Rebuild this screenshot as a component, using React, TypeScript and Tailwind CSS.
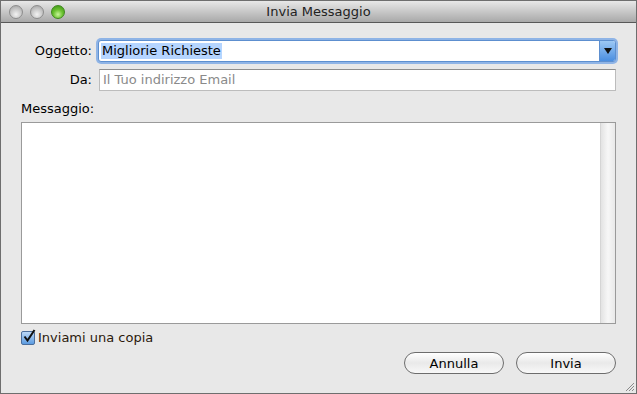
import React, { useState } from 'react';

const TrafficLight = ({ active }: { active?: boolean }) => (
  <span
    className={`block w-[14px] h-[14px] rounded-full border ${
      active
        ? 'border-[#3f8a1e] bg-[radial-gradient(circle_at_50%_70%,#c8f59a_0%,#6cc232_45%,#3a8f12_100%)]'
        : 'border-[#8d8d8d] bg-[radial-gradient(circle_at_50%_70%,#f2f2f2_0%,#c9c9c9_50%,#9e9e9e_100%)]'
    }`}
  />
);

export default function App() {
  const [copy, setCopy] = useState(true);

  return (
    <div
      className="w-[637px] h-[394px] flex flex-col bg-[#e8e8e8] border border-[#6e6e6e] text-[13px] text-black overflow-hidden"
      style={{ fontFamily: '"Lucida Grande", "DejaVu Sans", Arial, sans-serif' }}
    >
      {/* Title bar */}
      <div className="relative h-[22px] shrink-0 flex items-center bg-gradient-to-b from-[#e8e8e8] to-[#a9a9a9] border-b border-[#585858]">
        <div className="flex items-center gap-[7px] pl-[8px]">
          <TrafficLight />
          <TrafficLight />
          <TrafficLight active />
        </div>
        <div className="absolute inset-0 flex items-center justify-center text-[13px] text-[#222]">
          Invia Messaggio
        </div>
      </div>

      {/* Body */}
      <div className="flex-1 flex flex-col pl-[20px] pr-[20px]">
        {/* Oggetto */}
        <div className="flex items-center mt-[17px] h-[22px]">
          <span className="w-[77px] text-right pr-[6px]">Oggetto:</span>
          <div className="flex-1 flex h-[22px] rounded-[3px] border border-[#5d8fcf] shadow-[0_0_0_2px_#8fb4e6] bg-white overflow-hidden">
            <div className="flex-1 flex items-center pl-[2px]">
              <span className="bg-[#b5d5ff] px-[1px] leading-[16px]">Migliorie Richieste</span>
            </div>
            <div className="w-[16px] flex items-center justify-center bg-gradient-to-b from-[#9cc8f4] to-[#4a8ee0] border-l border-[#5d8fcf]">
              <svg width="8" height="6" viewBox="0 0 8 6">
                <path d="M0 0h8L4 6z" fill="#111" />
              </svg>
            </div>
          </div>
        </div>

        {/* Da */}
        <div className="flex items-center mt-[7px] h-[22px]">
          <span className="w-[78px] text-right pr-[7px]">Da:</span>
          <div className="flex-1 h-[22px] flex items-center bg-white border border-[#bcbcbc] border-t-[#8e8e8e] pl-[3px] text-[#8a8a8a]">
            Il Tuo indirizzo Email
          </div>
        </div>

        {/* Messaggio */}
        <div className="mt-[10px] leading-[16px]">Messaggio:</div>
        <div className="mt-[5px] h-[202px] flex bg-white border border-[#9a9a9a]">
          <div className="flex-1" />
          <div className="w-[15px] border-l border-[#d5d5d5] bg-gradient-to-r from-[#e3e3e3] via-[#f7f7f7] to-[#e9e9e9]" />
        </div>

        {/* Checkbox */}
        <label className="flex items-center mt-[6px] gap-[3px] leading-[16px]">
          <button
            onClick={() => setCopy(!copy)}
            className="relative w-[14px] h-[14px] rounded-[2px] border border-[#4b6e9c] bg-gradient-to-b from-[#bcd8f7] to-[#5b9be0]"
          >
            {copy && (
              <svg className="absolute -top-[3px] left-[1px]" width="13" height="14" viewBox="0 0 13 14">
                <path d="M1.5 7.5l3 4L11.5 1" stroke="#111" strokeWidth="2" fill="none" />
              </svg>
            )}
          </button>
          <span className="text-[#2b1a0c]">Inviami una copia</span>
        </label>

        {/* Buttons */}
        <div className="flex justify-end gap-[12px] mt-[6px]">
          <button className="w-[100px] h-[22px] rounded-full border border-[#6d6d6d] bg-gradient-to-b from-[#ffffff] via-[#e9e9e9] to-[#f8f8f8] text-[13px] leading-none">
            Annulla
          </button>
          <button className="w-[100px] h-[22px] rounded-full border border-[#6d6d6d] bg-gradient-to-b from-[#ffffff] via-[#e9e9e9] to-[#f8f8f8] text-[13px] leading-none">
            Invia
          </button>
        </div>

        {/* Resize grip */}
        <div className="flex justify-end mt-auto -mr-[19px] mb-[1px]">
          <svg width="11" height="11" viewBox="0 0 11 11">
            <path d="M10 2L2 10M10 5L5 10M10 8L8 10" stroke="#8a8a8a" strokeWidth="1" />
          </svg>
        </div>
      </div>
    </div>
  );
}
